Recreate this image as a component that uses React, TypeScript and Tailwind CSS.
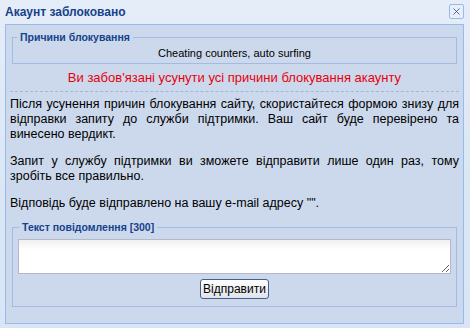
import { X } from 'lucide-react'

const font = { fontFamily: '"Liberation Sans", Arial, sans-serif' }

export default function App() {
  return (
    <div
      className="flex h-[328px] w-[470px] flex-col bg-gradient-to-b from-[#e5edf8] via-[#dce7f6] to-[#d9e5f5] text-black"
      style={font}
    >
      {/* header */}
      <div className="flex h-[24px] shrink-0 items-center justify-between pl-[5px] pr-[6px]">
        <span className="text-[12px] font-bold leading-none text-[#15428b]">Акаунт заблоковано</span>
        <button className="mb-[2px] flex h-[15px] w-[15px] items-center justify-center rounded-[2px] border border-[#99bbe8] bg-[#e8eff9] text-[#15428b]">
          <X className="h-[11px] w-[11px]" strokeWidth={1.6} />
        </button>
      </div>

      {/* body */}
      <div className="mb-[4px] ml-[5px] mr-[6px] flex flex-1 flex-col border border-[#99bbe8] bg-[#ccd9ed] px-[6px]">
        <fieldset className="mt-[6px] border border-[#a3bbe3] px-[6px] pb-[3px] pt-0">
          <legend className="-ml-[2px] px-[3px] text-[10.5px] font-bold leading-[13px] text-[#15428b]">
            Причини блокування
          </legend>
          <div className="mt-[3px] text-center text-[11px] leading-[13px]">Cheating counters, auto surfing</div>
        </fieldset>

        <div className="mt-[5px] text-center text-[13px] leading-[17px] text-[#e8000b]">
          Ви забов'язані усунути усі причини блокування акаунту
        </div>

        <div className="-mx-[2px] mt-[5px] border-t border-dashed border-[#9fb6dd]" />

        <div className="-mx-[2px] mt-[5px] text-justify text-[12.5px] leading-[15px]">
          <p>
            Після усунення причин блокування сайту, скористайтеся формою знизу для відправки запиту до служби
            підтримки. Ваш сайт буде перевірено та винесено вердикт.
          </p>
          <p className="mt-[12px]">
            Запит у службу підтримки ви зможете відправити лише один раз, тому зробіть все правильно.
          </p>
          <p className="mt-[12px]">Відповідь буде відправлено на вашу e-mail адресу "".</p>
        </div>

        <fieldset className="mt-[10px] border border-[#a3bbe3] px-[5px] pb-[7px] pt-0">
          <legend className="ml-[1px] px-[3px] text-[10.5px] font-bold leading-[13px] text-[#15428b]">
            Текст повідомлення [300]
          </legend>
          <textarea className="mt-[5px] block h-[35px] w-full border border-[#b5b8c8] bg-gradient-to-b from-[#f0f0f0] to-white to-[30%] outline-none" />
          <div className="mt-[5px] flex justify-center">
            <button className="h-[20px] w-[69px] rounded-[3px] border border-[#44618d] bg-gradient-to-b from-white to-[#dfe3ea] text-[12px] leading-none text-black">
              Відправити
            </button>
          </div>
        </fieldset>
      </div>
    </div>
  )
}
